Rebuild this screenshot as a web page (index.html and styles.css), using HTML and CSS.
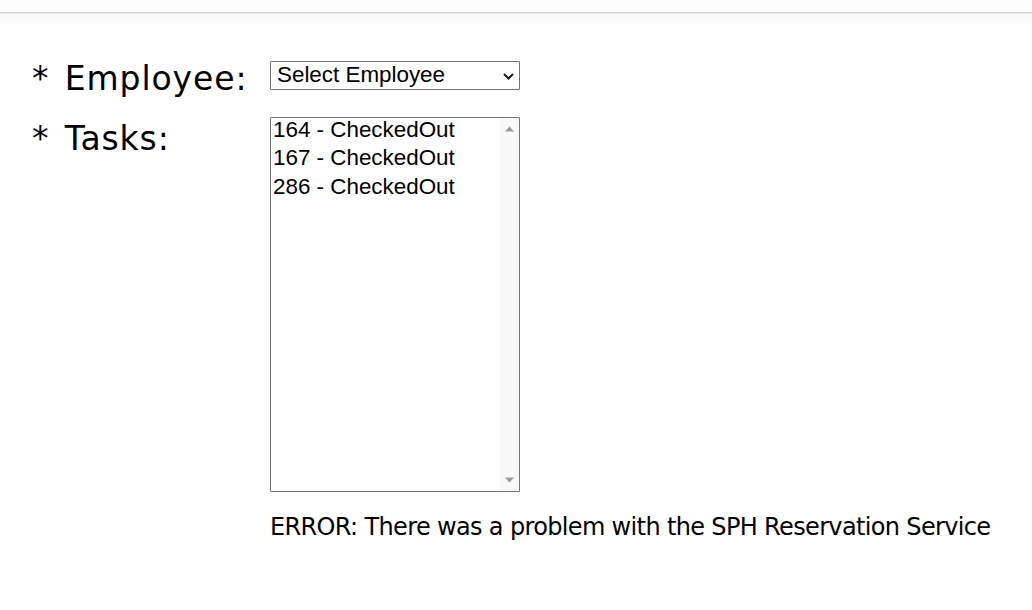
FILE: index.html
```html
<!DOCTYPE html>
<html lang="en">
<head>
<meta charset="utf-8">
<title>Tasks</title>
<link rel="stylesheet" href="styles.css">
</head>
<body>
<div class="topbar"></div>
<div class="topfade"></div>
<form class="form">
  <div class="row row-employee">
    <label class="label">* Employee:</label>
    <div class="select">
      <span class="select-text">Select Employee</span>
      <svg class="chevron" width="11" height="7" viewBox="0 0 11 7"><path d="M1 1 L5.5 5.5 L10 1" fill="none" stroke="#1b1b1b" stroke-width="2"/></svg>
    </div>
  </div>
  <div class="row row-tasks">
    <label class="label label-tasks">* Tasks:</label>
    <div class="listbox">
      <div class="options">
        <div class="option">164 - CheckedOut</div>
        <div class="option">167 - CheckedOut</div>
        <div class="option">286 - CheckedOut</div>
      </div>
      <div class="scrollbar">
        <svg width="9" height="6" viewBox="0 0 9 6"><path d="M0 5.5 L4.5 0.5 L9 5.5 Z" fill="#9a9a9a"/></svg>
        <svg width="9" height="6" viewBox="0 0 9 6"><path d="M0 0.5 L4.5 5.5 L9 0.5 Z" fill="#9a9a9a"/></svg>
      </div>
    </div>
  </div>
  <div class="row row-error">
    <span class="spacer"></span>
    <p class="error">ERROR: There was a problem with the SPH Reservation Service</p>
  </div>
</form>
</body>
</html>
```

FILE: styles.css
```css
html, body {
  margin: 0;
  padding: 0;
  background: #ffffff;
}
body {
  font-family: "DejaVu Sans", Verdana, sans-serif;
  color: #000;
}
.topbar {
  height: 12px;
  background: #fdfdfd;
  border-bottom: 1px solid #d4d4d4;
}
.topfade {
  height: 14px;
  border-top: 1px solid #e4e6e5;
  background: linear-gradient(#f8fbfa, #ffffff);
}
.form {
  padding: 32px 0 0 32px;
  display: flex;
  flex-direction: column;
}
.row {
  display: flex;
  align-items: flex-start;
}
.label {
  width: 238px;
  flex: none;
  font-size: 33px;
  line-height: 37px;
  letter-spacing: 0.9px;
  word-spacing: 4px;
  white-space: nowrap;
}
.select {
  margin-top: 1px;
  width: 250px;
  height: 29px;
  box-sizing: border-box;
  border: 1px solid #767676;
  border-radius: 1px;
  display: flex;
  align-items: flex-start;
  justify-content: space-between;
  padding: 0 5px 0 6px;
  font-family: "Liberation Sans", Arial, sans-serif;
  font-size: 22.4px;
  line-height: 25px;
}
.chevron {
  margin-top: 11px;
}
.row-tasks {
  margin-top: 20px;
}
.label-tasks {
  margin-top: 3px;
}
.listbox {
  width: 250px;
  height: 375px;
  box-sizing: border-box;
  border: 1px solid #767676;
  border-radius: 1px;
  display: flex;
}
.options {
  flex: 1;
  padding-left: 2px;
  font-family: "Liberation Sans", Arial, sans-serif;
  font-size: 22.4px;
}
.option {
  line-height: 24px;
  padding-bottom: 4.33px;
  white-space: nowrap;
}
.scrollbar {
  width: 19px;
  background: #f8f8f8;
  display: flex;
  flex-direction: column;
  justify-content: space-between;
  align-items: center;
  padding: 8px 0 8px;
  box-sizing: border-box;
}
.scrollbar svg {
  display: block;
}
.row-error {
  margin-top: 21px;
}
.spacer {
  width: 238px;
  flex: none;
}
.error {
  margin: 0;
  font-size: 24px;
  line-height: 28px;
  letter-spacing: -0.65px;
  white-space: nowrap;
}
```
